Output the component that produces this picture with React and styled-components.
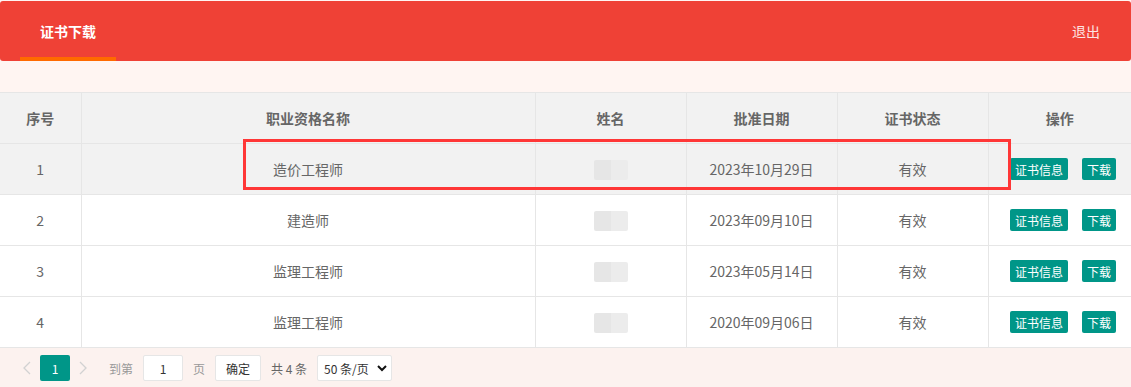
import React from "react";
import styled, { createGlobalStyle } from "styled-components";

const Global = createGlobalStyle`
  html, body { margin: 0; padding: 0; background: #fff; }
  body { font-family: "Noto Sans CJK SC", "Liberation Sans", sans-serif; font-size: 14px; color: #666; }
  * { box-sizing: border-box; }
`;

const Page = styled.div`
  width: 1131px;
  height: 387px;
  background: #fff5f2;
  padding-top: 1px;
  position: relative;
  overflow: hidden;
`;

const Header = styled.div`
  height: 60px;
  background: #ef4136;
  border-radius: 3px;
  display: flex;
  align-items: stretch;
  justify-content: space-between;
  padding: 0 31px 0 20px;
`;

const Tab = styled.div`
  width: 96px;
  display: flex;
  align-items: center;
  justify-content: center;
  color: #fff;
  font-weight: bold;
  font-size: 14px;
  border-bottom: 4px solid #ff6a00;
  padding-top: 4px;
`;

const Logout = styled.div`
  display: flex;
  align-items: center;
  color: #fde4e2;
  font-size: 14px;
`;

const Spacer = styled.div`
  height: 31px;
`;

const Table = styled.table`
  width: 1131px;
  border-collapse: collapse;
  table-layout: fixed;
  background: #fff;
  border-top: 1px solid #e6e6e6;
`;

const Th = styled.th`
  height: 51px;
  background: #f2f2f2;
  color: #666;
  font-weight: bold;
  font-size: 14px;
  text-align: center;
  border: 1px solid #e6e6e6;
  border-top: none;
  &:first-child { border-left: none; }
  &:last-child { border-right: none; }
`;

const Tr = styled.tr`
  background: ${(p) => (p.$active ? "#f2f2f2" : "#fff")};
`;

const Td = styled.td`
  height: 51px;
  text-align: center;
  color: #666;
  font-size: 14px;
  border: 1px solid #e6e6e6;
  &:first-child { border-left: none; }
  &:last-child { border-right: none; }
`;

const Blur = styled.span`
  display: inline-block;
  width: 34px;
  height: 20px;
  vertical-align: middle;
  background: linear-gradient(90deg, #e6e6e6 0 50%, #ececec 50% 100%);
  border-radius: 2px;
  filter: blur(0.6px);
`;

const Actions = styled.div`
  display: flex;
  justify-content: flex-end;
  gap: 14px;
  padding-right: 14px;
`;

const SmallBtn = styled.span`
  display: inline-flex;
  align-items: center;
  justify-content: center;
  height: 22px;
  padding: 0 5px;
  background: #009688;
  color: #fff;
  font-size: 12px;
  border-radius: 2px;
`;

const Pager = styled.div`
  height: 40px;
  background: #fcf2ef;
  display: flex;
  align-items: center;
  padding-left: 14px;
  font-size: 12px;
  color: #999;
`;

const Arrow = styled.span`
  width: 26px;
  display: flex;
  align-items: center;
  justify-content: center;
  color: #d2d2d2;
`;

const Current = styled.span`
  width: 30px;
  height: 26px;
  background: #009688;
  color: #fff;
  border-radius: 2px;
  display: flex;
  align-items: center;
  justify-content: center;
  font-size: 12px;
`;

const Label = styled.span`
  color: ${(p) => p.$color || "#999"};
  margin: ${(p) => p.$m || "0"};
`;

const Box = styled.span`
  height: 26px;
  width: ${(p) => p.$w}px;
  border: 1px solid #e6e6e6;
  background: #fff;
  border-radius: 2px;
  display: inline-flex;
  align-items: center;
  justify-content: ${(p) => p.$justify || "center"};
  color: #333;
  font-size: 12px;
  padding: ${(p) => p.$pad || "0"};
  margin: ${(p) => p.$m || "0"};
`;

const Highlight = styled.div`
  position: absolute;
  left: 243px;
  top: 139px;
  width: 768px;
  height: 51px;
  border: 3px solid #ff3737;
  pointer-events: none;
`;

const Chevron = ({ dir }) => (
  <svg width="8" height="14" viewBox="0 0 8 14">
    <path
      d={dir === "left" ? "M7 1 L1 7 L7 13" : "M1 1 L7 7 L1 13"}
      fill="none"
      stroke="#d2d2d2"
      strokeWidth="1.3"
    />
  </svg>
);

const rows = [
  { id: 1, name: "造价工程师", date: "2023年10月29日" },
  { id: 2, name: "建造师", date: "2023年09月10日" },
  { id: 3, name: "监理工程师", date: "2023年05月14日" },
  { id: 4, name: "监理工程师", date: "2020年09月06日" },
];

export default function App() {
  return (
    <>
      <Global />
      <Page>
        <Header>
          <Tab>证书下载</Tab>
          <Logout>退出</Logout>
        </Header>
        <Spacer />
        <Table>
          <colgroup>
            <col style={{ width: 81 }} />
            <col style={{ width: 454 }} />
            <col style={{ width: 151 }} />
            <col style={{ width: 151 }} />
            <col style={{ width: 151 }} />
            <col style={{ width: 143 }} />
          </colgroup>
          <thead>
            <tr>
              <Th>序号</Th>
              <Th>职业资格名称</Th>
              <Th>姓名</Th>
              <Th>批准日期</Th>
              <Th>证书状态</Th>
              <Th>操作</Th>
            </tr>
          </thead>
          <tbody>
            {rows.map((r, i) => (
              <Tr key={r.id} $active={i === 0}>
                <Td>{r.id}</Td>
                <Td>{r.name}</Td>
                <Td>
                  <Blur />
                </Td>
                <Td>{r.date}</Td>
                <Td>有效</Td>
                <Td>
                  <Actions>
                    <SmallBtn>证书信息</SmallBtn>
                    <SmallBtn>下载</SmallBtn>
                  </Actions>
                </Td>
              </Tr>
            ))}
          </tbody>
        </Table>
        <Pager>
          <Arrow>
            <Chevron dir="left" />
          </Arrow>
          <Current>1</Current>
          <Arrow>
            <Chevron dir="right" />
          </Arrow>
          <Label $m="0 10px 0 13px">到第</Label>
          <Box $w={40}>1</Box>
          <Label $m="0 10px 0 10px">页</Label>
          <Box $w={46}>确定</Box>
          <Label $color="#666" $m="0 10px 0 10px">共 4 条</Label>
          <Box $w={75} $justify="space-between" $pad="0 4px 0 6px">
            50 条/页
            <svg width="10" height="8" viewBox="0 0 10 8">
              <path d="M1 2 L5 6 L9 2" fill="none" stroke="#111" strokeWidth="2" />
            </svg>
          </Box>
        </Pager>
        <Highlight />
      </Page>
    </>
  );
}
